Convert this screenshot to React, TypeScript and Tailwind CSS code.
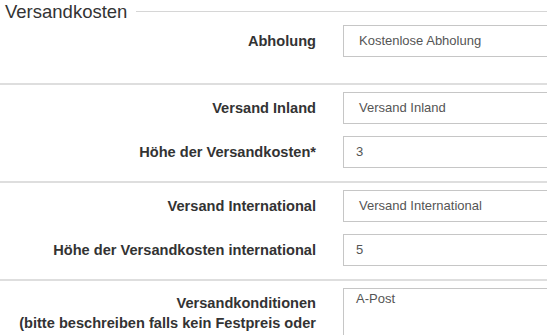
import React from "react";

function Label({ children }: { children: React.ReactNode }) {
  return (
    <div className="w-[316px] shrink-0 text-right font-bold text-[14.6px] leading-[20px] text-[#333333]">
      {children}
    </div>
  );
}

function Field({ value, select }: { value: string; select?: boolean }) {
  return (
    <div
      className={
        "h-[32px] w-[260px] shrink-0 border border-[#c6c6c6] bg-white flex items-center text-[13px] text-[#555555] " +
        (select ? "pl-[15px]" : "pl-[12px]")
      }
    >
      {value}
    </div>
  );
}

function Row({ label, value, select }: { label: string; value: string; select?: boolean }) {
  return (
    <div className="flex items-center gap-[27px]">
      <Label>{label}</Label>
      <Field value={value} select={select} />
    </div>
  );
}

function Sep() {
  return <div className="h-[2px] w-full bg-[#dedede]" />;
}

export default function App() {
  return (
    <div className="w-[547px] h-[335px] overflow-hidden bg-white font-['Liberation_Sans',Arial,sans-serif]">
      <div className="flex pt-px">
        <div className="pl-[5px] h-[22px] text-[18.5px] leading-[22px] text-[#333333]">Versandkosten</div>
        <div className="flex-1 ml-[9px] mt-[10px] h-px bg-[#d6d6d6]" />
      </div>
      <div className="pt-[2px] pb-[26px]">
        <Row label="Abholung" value="Kostenlose Abholung" select />
      </div>
      <Sep />
      <div className="pt-[7px] pb-[13px] flex flex-col gap-[12px]">
        <Row label="Versand Inland" value="Versand Inland" select />
        <Row label="Höhe der Versandkosten*" value="3" />
      </div>
      <Sep />
      <div className="pt-[7px] pb-[13px] flex flex-col gap-[12px]">
        <Row label="Versand International" value="Versand International" select />
        <Row label="Höhe der Versandkosten international" value="5" />
      </div>
      <Sep />
      <div className="pt-[7px] flex items-start gap-[27px]">
        <div className="w-[316px] shrink-0 pt-[5px] text-right font-bold text-[14.6px] leading-[20px] text-[#333333]">
          Versandkonditionen
          <br />
          (bitte beschreiben falls kein Festpreis oder Gratisversand)
        </div>
        <div className="h-[80px] w-[260px] shrink-0 border border-[#c6c6c6] bg-white pl-[12px] pt-[2px] text-[13px] leading-[16px] text-[#555555]">
          A-Post
        </div>
      </div>
    </div>
  );
}
